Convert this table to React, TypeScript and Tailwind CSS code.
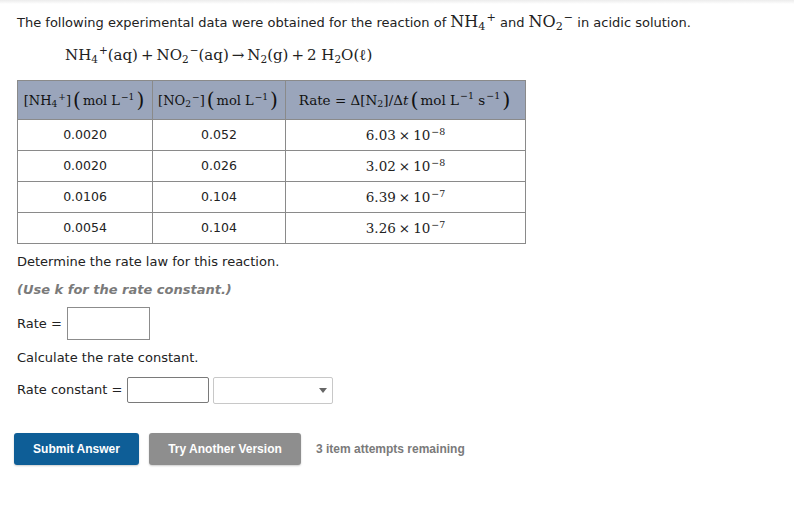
import React from "react";

const serif = { fontFamily: '"DejaVu Serif", "Liberation Serif", serif' } as React.CSSProperties;

function Sub({ children }: { children: React.ReactNode }) {
  return <span className="text-[0.7em] align-[-0.25em] leading-none">{children}</span>;
}
function Sup({ children }: { children: React.ReactNode }) {
  return <span className="text-[0.7em] align-[0.55em] leading-none ml-[1px]">{children}</span>;
}
function BigP({ children }: { children: React.ReactNode }) {
  return <span className="text-[1.55em] leading-none align-[-0.1em] font-extralight mx-[2px]">{children}</span>;
}
function Op({ children }: { children: React.ReactNode }) {
  return <span className="mx-[3px]">{children}</span>;
}

export default function App() {
  return (
    <div className="w-[794px] h-[518px] bg-white text-[#222]" style={{ fontFamily: '"DejaVu Sans", Verdana, sans-serif' }}>
      <div className="h-[4px] bg-gradient-to-b from-[#ececec] to-white" />
      <div className="px-[17px]">
        <p className="mt-[8px] h-[20px] leading-[20px] text-[13px] whitespace-nowrap">
          The following experimental data were obtained for the reaction of{" "}
          <span className="text-[16px] leading-none" style={serif}>
            NH<Sub>4</Sub><Sup>+</Sup>
          </span>{" "}
          and{" "}
          <span className="text-[16px] leading-none" style={serif}>
            NO<Sub>2</Sub><Sup>−</Sup>
          </span>{" "}
          in acidic solution.
        </p>
        <div className="mt-[11px] ml-[48px] h-[24px] leading-[24px] text-[15px] whitespace-nowrap" style={serif}>
          NH<Sub>4</Sub><Sup>+</Sup>(aq)<Op>+</Op>NO<Sub>2</Sub><Sup>−</Sup>(aq)<Op>→</Op>N<Sub>2</Sub>(g)<Op>+</Op>2 H<Sub>2</Sub>O(ℓ)
        </div>
        <table className="mt-[13px] border-collapse border border-[#8a8a8a] text-[12.5px] table-fixed">
          <thead>
            <tr className="h-[39px] bg-[#9aa5bb]" style={serif}>
              <th className="w-[135px] border border-[#8a8a8a] font-normal text-[13px] text-[#111] whitespace-nowrap px-0">
                [NH<Sub>4</Sub><Sup>+</Sup>]<BigP>(</BigP>mol L<Sup>−1</Sup><BigP>)</BigP>
              </th>
              <th className="w-[133px] border border-[#8a8a8a] font-normal text-[13px] text-[#111] whitespace-nowrap px-0">
                [NO<Sub>2</Sub><Sup>−</Sup>]<BigP>(</BigP>mol L<Sup>−1</Sup><BigP>)</BigP>
              </th>
              <th className="w-[240px] border border-[#8a8a8a] font-normal text-[13.5px] text-[#111] whitespace-nowrap px-0">
                Rate = Δ[N<Sub>2</Sub>]/Δ<i>t</i><BigP>(</BigP>mol L<Sup>−1</Sup> s<Sup>−1</Sup><BigP>)</BigP>
              </th>
            </tr>
          </thead>
          <tbody>
            {[
              ["0.0020", "0.052", "6.03", "−8"],
              ["0.0020", "0.026", "3.02", "−8"],
              ["0.0106", "0.104", "6.39", "−7"],
              ["0.0054", "0.104", "3.26", "−7"],
            ].map((r, i) => (
              <tr key={i} className="h-[31px]">
                <td className="border border-[#8a8a8a] text-center">{r[0]}</td>
                <td className="border border-[#8a8a8a] text-center">{r[1]}</td>
                <td className="border border-[#8a8a8a] text-center text-[13.5px]" style={serif}>
                  {r[2]}<Op>×</Op>10<Sup>{r[3]}</Sup>
                </td>
              </tr>
            ))}
          </tbody>
        </table>
        <p className="mt-[8px] h-[20px] leading-[20px] text-[13px]">Determine the rate law for this reaction.</p>
        <p className="mt-[8px] h-[20px] leading-[20px] text-[13px] italic font-bold text-[#7a7a7a]">(Use k for the rate constant.)</p>
        <div className="mt-[7px] flex items-center h-[33px] text-[13px]">
          <span>Rate =</span>
          <div className="ml-[5px] w-[83px] h-[33px] border border-[#8c8c8c] bg-white" />
        </div>
        <p className="mt-[8px] h-[20px] leading-[20px] text-[13px]">Calculate the rate constant.</p>
        <div className="mt-[9px] flex items-center h-[26px] text-[13px]">
          <span>Rate constant =</span>
          <div className="ml-[5px] w-[82px] h-[26px] border border-[#7a7a7a] rounded-[2px] bg-white" />
          <div className="ml-[4px] w-[120px] h-[27px] border border-[#c8c8c8] rounded-[2px] bg-white relative">
            <svg className="absolute right-[4px] top-[10px]" width="10" height="6" viewBox="0 0 10 6">
              <path d="M1 0 H9 L5 5 Z" fill="#666" />
            </svg>
          </div>
        </div>
        <div className="mt-[30px] -ml-[3px] flex items-center h-[32px]" style={{ fontFamily: '"Liberation Sans", Arial, sans-serif' }}>
          <button className="w-[125px] h-[32px] rounded-[3px] bg-[#0e5e97] text-white font-bold text-[12px] shadow-[0_1px_2px_rgba(0,0,0,0.2)]">
            Submit Answer
          </button>
          <button className="ml-[10px] w-[152px] h-[32px] rounded-[3px] bg-[#8e8e8e] text-white font-bold text-[12px] shadow-[0_1px_2px_rgba(0,0,0,0.2)]">
            Try Another Version
          </button>
          <span className="ml-[15px] text-[12px] font-bold text-[#7a7a7a]">3 item attempts remaining</span>
        </div>
      </div>
    </div>
  );
}
